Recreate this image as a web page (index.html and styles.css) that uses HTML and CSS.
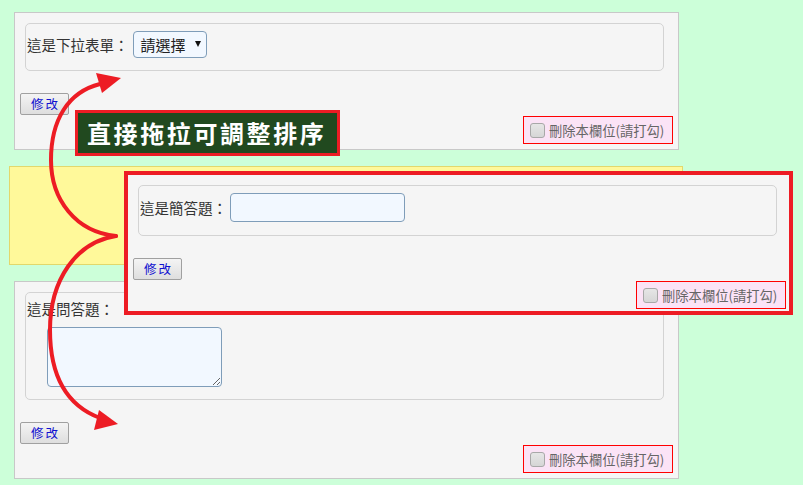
FILE: index.html
```html
<!DOCTYPE html>
<html lang="zh-Hant">
<head>
<meta charset="utf-8">
<title>排序</title>
<link rel="stylesheet" href="styles.css">
</head>
<body>
<div class="page">
  <div class="panel">
    <fieldset class="field">
      <div class="row">
        <span class="label">這是下拉表單：</span>
        <span class="select">請選擇<span class="caret"></span></span>
      </div>
    </fieldset>
    <button class="edit">修改</button>
    <label class="del"><input type="checkbox" class="chk"><span>刪除本欄位(請打勾)</span></label>
  </div>

  <div class="placeholder"></div>

  <div class="panel">
    <fieldset class="field">
      <div class="label line">這是問答題：</div>
      <textarea class="area"></textarea>
    </fieldset>
    <button class="edit">修改</button>
    <label class="del"><input type="checkbox" class="chk"><span>刪除本欄位(請打勾)</span></label>
  </div>
</div>

<div class="panel dragging">
  <fieldset class="field">
    <div class="row">
      <span class="label">這是簡答題：</span>
      <input type="text" class="text">
    </div>
  </fieldset>
  <button class="edit">修改</button>
  <label class="del"><input type="checkbox" class="chk"><span>刪除本欄位(請打勾)</span></label>
</div>

<div class="tip">直接拖拉可調整排序</div>

<svg class="arrows" width="803" height="485" viewBox="0 0 803 485" xmlns="http://www.w3.org/2000/svg">
  <path d="M116,236 C76,232 51,200 51,160 C51,120 68,92 100,84" fill="none" stroke="#ed1c24" stroke-width="4" stroke-linecap="round"/>
  <polygon points="96,73 121,78 102,93" fill="#ed1c24"/>
  <path d="M116,236 C76,242 50,280 50,330 C50,378 68,406 100,418" fill="none" stroke="#ed1c24" stroke-width="4" stroke-linecap="round"/>
  <polygon points="99,410 118,424 94,430" fill="#ed1c24"/>
</svg>
</body>
</html>
```

FILE: styles.css
```css
* { box-sizing: border-box; }

body {
  margin: 0;
  background: #ccffd9;
  font-family: "Noto Sans CJK TC", "Noto Sans", sans-serif;
  color: #333;
  width: 803px;
  height: 485px;
  overflow: hidden;
  position: relative;
}

.page {
  padding-top: 12px;
}

.panel {
  width: 665px;
  margin-left: 14px;
  background: #f5f5f5;
  border: 1px solid #c8c8c8;
  padding: 10px 5px 5px 5px;
  display: flex;
  flex-direction: column;
  align-items: flex-start;
}

.field {
  align-self: stretch;
  margin: 0 9px 0 5px;
  border: 1px solid #d3d3d3;
  border-radius: 5px;
  padding: 7px 1px 12px 1px;
  min-width: 0;
}

.row {
  display: flex;
  align-items: center;
}

.label {
  font-size: 14.5px;
  line-height: 18px;
  color: #333;
}

.select {
  margin-left: 4px;
  height: 27px;
  width: 74px;
  border: 1px solid #7f9db9;
  border-radius: 4px;
  background: #f2f8ff;
  display: flex;
  align-items: center;
  padding-left: 7px;
  font-size: 15px;
  color: #222;
}

.caret {
  width: 0;
  height: 0;
  margin-left: 9px;
  margin-top: -2px;
  border-left: 3.5px solid transparent;
  border-right: 3.5px solid transparent;
  border-top: 6px solid #111;
}

.text {
  margin: 0 0 0 3px;
  width: 175px;
  height: 29px;
  border: 1px solid #7f9db9;
  border-radius: 4px;
  background: #f2f8ff;
}

.line {
  height: 18px;
}

.area {
  display: block;
  margin: 9px 0 0 20px;
  width: 175px;
  height: 60px;
  border: 1px solid #7f9db9;
  border-radius: 4px;
  background: #f2f8ff;
  padding: 0;
}

.edit {
  margin: 22px 0 0 0;
  width: 49px;
  height: 22px;
  padding: 0 0 0 2px;
  border: 1px solid #a0a0a0;
  border-radius: 2px;
  background: linear-gradient(#f4f4f4, #dedede);
  color: #1010d0;
  font-family: "Noto Sans CJK TC", sans-serif;
  font-size: 12.5px;
  letter-spacing: 2px;
  line-height: 20px;
}

.del {
  align-self: flex-end;
  margin-top: 1px;
  width: 150px;
  height: 28px;
  border: 1px solid #f00;
  background: #fbe3f6;
  display: flex;
  align-items: center;
  padding-left: 6px;
  font-size: 13.3px;
  color: #666;
}

.chk {
  appearance: none;
  -webkit-appearance: none;
  margin: 0 4px 0 0;
  width: 15px;
  height: 15px;
  border: 1px solid #a8a8a8;
  border-radius: 3px;
  background: linear-gradient(#e6e6e6, #d6d6d6);
}

.placeholder {
  margin: 16px 0 16px 9px;
  width: 674px;
  height: 99px;
  background: #fff99a;
  border: 1px solid #e2d86c;
}

.dragging {
  position: absolute;
  left: 124px;
  top: 171px;
  width: 669px;
  margin: 0;
  border: 4px solid #ed1c24;
  padding: 10px 3px 2px 5px;
}

.dragging .field {
  padding-bottom: 13px;
}

.tip {
  position: absolute;
  left: 75px;
  top: 110px;
  width: 265px;
  height: 46px;
  border: 3px solid #ed1c24;
  background: #21491f;
  color: #fff;
  font-size: 24px;
  font-weight: bold;
  letter-spacing: 2.6px;
  line-height: 40px;
  padding-left: 9px;
  white-space: nowrap;
}

.arrows {
  position: absolute;
  left: 0;
  top: 0;
  pointer-events: none;
}
```
